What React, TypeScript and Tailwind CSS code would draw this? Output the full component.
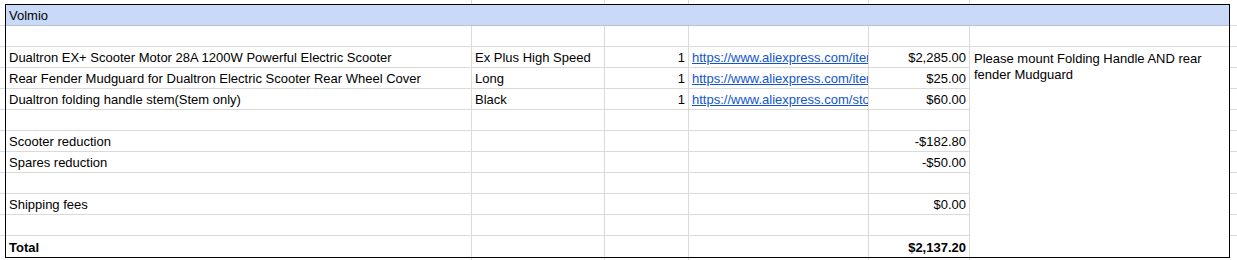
import React from "react";

const G = "border-[#dadada]";

type Row = {
  a?: string;
  b?: string;
  c?: string;
  d?: string;
  e?: string;
  bold?: boolean;
};

const rows: Row[] = [
  {},
  {
    a: "Dualtron EX+ Scooter Motor 28A 1200W Powerful Electric Scooter",
    b: "Ex Plus High Speed",
    c: "1",
    d: "https://www.aliexpress.com/item/32817960498.html",
    e: "$2,285.00",
  },
  {
    a: "Rear Fender Mudguard for Dualtron Electric Scooter Rear Wheel Cover",
    b: "Long",
    c: "1",
    d: "https://www.aliexpress.com/item/32838281417.html",
    e: "$25.00",
  },
  {
    a: "Dualtron folding handle stem(Stem only)",
    b: "Black",
    c: "1",
    d: "https://www.aliexpress.com/store/product/32840144318.html",
    e: "$60.00",
  },
  {},
  { a: "Scooter reduction", e: "-$182.80" },
  { a: "Spares reduction", e: "-$50.00" },
  {},
  { a: "Shipping fees", e: "$0.00" },
  {},
  { a: "Total", e: "$2,137.20", bold: true },
];

function Cell({
  children,
  right,
  last,
  bold,
  link,
}: {
  children?: React.ReactNode;
  right?: boolean;
  last?: boolean;
  bold?: boolean;
  link?: boolean;
}) {
  return (
    <div
      className={`h-[21px] border-r ${last ? "" : "border-b"} ${G} flex items-end px-[3px] pb-[2px] overflow-hidden whitespace-nowrap leading-[15px] ${
        right ? "justify-end" : "justify-start"
      } ${bold ? "font-bold" : ""}`}
    >
      {link ? (
        <span className="text-[#1155cc] underline">{children}</span>
      ) : (
        children
      )}
    </div>
  );
}

function Stub({ w }: { w: string }) {
  return (
    <div className={`${w} flex flex-col`}>
      <div className={`h-[22px] border-b ${G}`} />
      {Array.from({ length: 10 }).map((_, i) => (
        <div key={i} className={`h-[21px] border-b ${G}`} />
      ))}
      <div className="flex-1" />
    </div>
  );
}

function VStrip({ h }: { h: string }) {
  return (
    <div className={`${h} flex`}>
      <div className="w-[6px]" />
      <div className={`w-[466px] border-r ${G}`} />
      <div className={`w-[133px] border-r ${G}`} />
      <div className={`w-[84px] border-r ${G}`} />
      <div className={`w-[180px] border-r ${G}`} />
      <div className={`w-[101px] border-r ${G}`} />
      <div className="flex-1" />
    </div>
  );
}

export default function App() {
  return (
    <div className="w-[1237px] h-[260px] bg-white overflow-hidden font-['Liberation_Sans',Arial,sans-serif] text-[13px] text-black">
      <VStrip h="h-[4px]" />
      <div className="flex h-[254px]">
        <Stub w="w-[5px]" />
        <div className="w-[1225px] h-[254px] border border-black grid grid-cols-[466px_133px_84px_180px_101px_259px] grid-rows-[repeat(12,21px)]">
          <div className="col-span-6 h-[21px] bg-[#c9daf8] border-b border-[#b3c0d8] flex items-end px-[3px] pb-[2px] leading-[15px]">
            Volmio
          </div>
          {rows.map((r, i) => {
            const last = i === rows.length - 1;
            return (
              <React.Fragment key={i}>
                <Cell last={last} bold={r.bold}>
                  {r.a}
                </Cell>
                <Cell last={last}>{r.b}</Cell>
                <Cell last={last} right>
                  {r.c}
                </Cell>
                <Cell last={last} link={!!r.d}>
                  {r.d}
                </Cell>
                <Cell last={last} right bold={r.bold}>
                  {r.e}
                </Cell>
                {i === 0 ? (
                  <div className={`h-[21px] border-b ${G}`} />
                ) : i === 1 ? (
                  <div className="row-span-10 px-[4px] pt-[4px] leading-[16px] whitespace-normal">
                    Please mount Folding Handle AND rear fender Mudguard
                  </div>
                ) : null}
              </React.Fragment>
            );
          })}
        </div>
        <Stub w="flex-1" />
      </div>
      <VStrip h="h-[2px]" />
    </div>
  );
}
